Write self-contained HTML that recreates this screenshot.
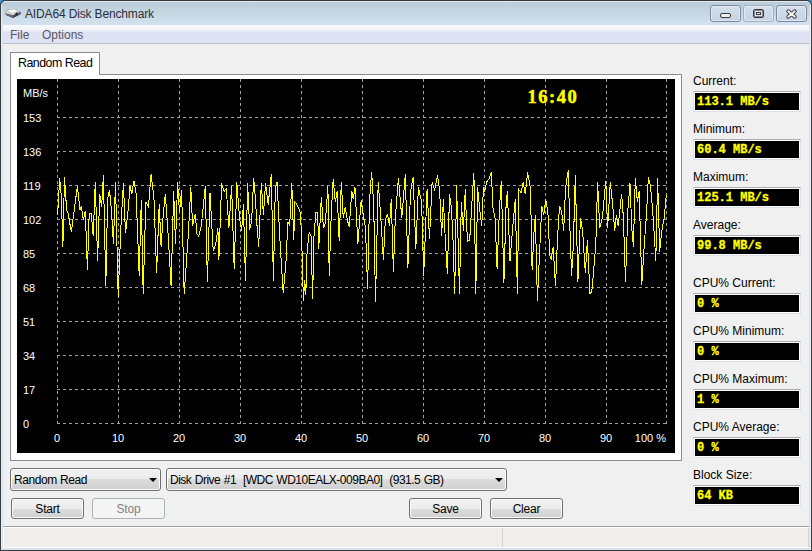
<!DOCTYPE html>
<html><head><meta charset="utf-8">
<style>
*{margin:0;padding:0;box-sizing:border-box}
html,body{width:812px;height:551px;overflow:hidden;background:#3d9be6}
body{position:relative;font-family:"Liberation Sans",sans-serif}
.a{position:absolute}
#win{left:0;top:0;width:812px;height:551px;background:#3a3a3a;border-radius:5px 5px 0 0}
#frame{left:1px;top:1px;width:810px;height:549px;background:#d4e1ee;border-radius:5px 5px 0 0}
#title{left:1px;top:1px;width:810px;height:24px;border-radius:5px 5px 0 0;background:linear-gradient(#e2eaf2 0,#e2eaf2 1px,#b9cdd9 1px,#d3e2ee 24px)}
#ttext{left:25px;top:7px;font-size:12px;color:#2e2e3c;letter-spacing:-0.15px;white-space:nowrap}
.tb{top:5px;width:31px;height:17px;border:1px solid #8c9aab;border-radius:3px;background:linear-gradient(#d3dfeb,#c4d3e3);box-shadow:inset 0 0 0 1px rgba(255,255,255,0.45)}
#menu{left:3px;top:25px;width:806px;height:19px;background:linear-gradient(#fafbfd 0,#eef0f8 6px,#dde1f1 7px,#dfe3f3 18px,#b8c0d0 18px)}
.mi{top:5px;font-size:12px;color:#5a5668}
#client{left:3px;top:44px;width:806px;height:482px;background:#f0f0f0}
#status{left:3px;top:526px;width:806px;height:22px;background:#a0a0a0}
#status2{left:3px;top:527px;width:806px;height:21px;background:#fff}
#status3{left:4px;top:528px;width:805px;height:19px;background:#f0edeb}
#tab{left:10px;top:52px;width:90px;height:23px;background:#fff;border:1px solid #898c95;border-bottom:none}
#panel{left:10px;top:74px;width:672px;height:387px;background:#fff;border:1px solid #898c95}
#tabpatch{left:11px;top:74px;width:88px;height:2px;background:#fff}
#tabtext{left:18px;top:56px;font-size:12.4px;letter-spacing:-0.5px;color:#000;white-space:nowrap}
#chart{left:17px;top:79px;width:658px;height:374px;background:#000}
.lbl{font-size:12px;color:#000;white-space:nowrap;left:693px;margin-top:1px}
.box{left:693px;width:108px;height:21px;border:1px solid #dbe0e8;border-top-color:#abadb3;background:#000;box-shadow:inset 0 0 0 1px #fff}
.val{position:absolute;left:3px;top:3px;font:bold 12px "Liberation Mono",monospace;color:#ffff00;white-space:nowrap;line-height:14px;-webkit-text-stroke:0.3px #ffff00}
.btn{top:498px;width:73px;height:21px;border:1px solid #707070;border-radius:3px;background:linear-gradient(#f2f2f2 0,#ebebeb 50%,#dddddd 50%,#cfcfcf 100%);box-shadow:inset 0 0 0 1px #fcfcfc;font-size:12px;text-align:center;line-height:21px;color:#000;letter-spacing:-0.2px}
.btn.dis{border-color:#adb2b5;background:#f4f4f4;color:#838383;box-shadow:none}
.combo{top:468px;height:23px;border:1px solid #707070;border-radius:3px;background:linear-gradient(#f2f2f2 0,#ebebeb 50%,#dddddd 50%,#cfcfcf 100%);box-shadow:inset 0 0 0 1px #fcfcfc;font-size:12px;color:#000;white-space:nowrap}
.combo span{position:absolute;left:3px;top:4px;letter-spacing:-0.4px}
.arr{position:absolute;top:9px;width:0;height:0;border-left:4px solid transparent;border-right:4px solid transparent;border-top:4px solid #000}
</style></head><body>
<div id="win" class="a"></div>
<div id="frame" class="a"></div>
<div id="title" class="a"></div>
<div class="a" style="left:1px;top:5px;width:1px;height:545px;background:#e8f0fa"></div>
<div class="a" style="left:810px;top:5px;width:1px;height:545px;background:#edf3fb"></div>
<svg class="a" style="left:0px;top:0px" width="24" height="24" viewBox="0 0 24 24">
<path d="M4.9 11.8 L7.9 9.3 L15.3 8.9 L21 12.4 L20.5 14.3 L13.1 18 L6 14.9 Z" fill="#3e3f46"/>
<path d="M4.9 11.8 L7.9 9.3 L15.3 8.9 L20 11.6 L13 15.6 L5.6 13.6 Z" fill="#cfcfcf"/>
<path d="M8 10.2 L14 9.8 L17 11.5 L12 13 Z" fill="#fafafa"/>
<path d="M5.6 13.6 L13 15.6 L13.1 18 L6 14.9 Z" fill="#66666c"/>
<path d="M18 12.4 L20 12 L19.8 13.6 L18 14 Z" fill="#8886c8"/>
<path d="M15.5 13 L17.5 12.6 L17.5 14.5 L15.5 15 Z" fill="#202028"/>
</svg>
<div id="ttext" class="a">AIDA64 Disk Benchmark</div>
<div class="a tb" style="left:710px;border-color:#7b88a3"></div>
<div class="a tb" style="left:743px;border-color:#a3afc0"></div>
<div class="a tb" style="left:776px;border-color:#7b88a3"></div>
<div class="a" style="left:720px;top:13px;width:11px;height:5px;border:1px solid #363a48;border-radius:2px;background:#f2efe8"></div>
<div class="a" style="left:753px;top:9px;width:11px;height:9px;border:1px solid #363a48;border-radius:2px;background:#e6e2da;box-shadow:inset 0 0 0 1px rgba(54,58,72,0.55)"></div>
<div class="a" style="left:756px;top:12px;width:5px;height:3px;border:1px solid #363a48;background:#dfe8f2"></div>
<svg class="a" style="left:776px;top:5px" width="31" height="17" viewBox="0 0 31 17"><path d="M12.2 6.3 L18.8 11.7 M18.8 6.3 L12.2 11.7" stroke="#363a48" stroke-width="3.8" stroke-linecap="round"/><path d="M12.2 6.3 L18.8 11.7 M18.8 6.3 L12.2 11.7" stroke="#f4f4f2" stroke-width="1.9" stroke-linecap="round"/></svg>
<div id="menu" class="a"></div>
<div class="a mi" style="left:10px;top:28px">File</div>
<div class="a mi" style="left:42px;top:28px">Options</div>
<div id="client" class="a"></div>
<div id="status" class="a"></div>
<div id="status2" class="a"></div>
<div id="status3" class="a"></div>
<div class="a" style="left:502px;top:528px;width:1px;height:19px;background:#d2d0ce"></div>
<div class="a" style="left:808px;top:528px;width:1px;height:19px;background:#d8d6d4"></div>

<div id="panel" class="a"></div>
<div id="tab" class="a"></div>
<div id="tabpatch" class="a"></div>
<div id="tabtext" class="a">Random Read</div>
<svg class="a" style="left:17px;top:79px" width="658" height="374" viewBox="17 79 658 374" shape-rendering="crispEdges">
<rect x="17" y="79" width="658" height="374" fill="#000"/>
<path d="M57.5 79V424M118.5 79V424M179.5 79V424M240.5 79V424M301.5 79V424M362.5 79V424M423.5 79V424M484.5 79V424M545.5 79V424M606.5 79V424M666.5 79V424M57 117.5H667M57 151.5H667M57 185.5H667M57 219.5H667M57 253.5H667M57 287.5H667M57 321.5H667M57 355.5H667M57 389.5H667M57 423.5H667" stroke="#a0a0a0" stroke-width="1" stroke-dasharray="3 3" fill="none"/>
<g font-family="Liberation Sans" font-size="11" fill="#fff">
<text x="23" y="96.5">MB/s</text>
<text x="23" y="122">153</text>
<text x="23" y="156">136</text>
<text x="23" y="190">119</text>
<text x="23" y="224">102</text>
<text x="23" y="258">85</text>
<text x="23" y="292">68</text>
<text x="23" y="326">51</text>
<text x="23" y="360">34</text>
<text x="23" y="394">17</text>
<text x="23" y="428">0</text>
<text x="57" y="442" text-anchor="middle">0</text>
<text x="118" y="442" text-anchor="middle">10</text>
<text x="179" y="442" text-anchor="middle">20</text>
<text x="240" y="442" text-anchor="middle">30</text>
<text x="301" y="442" text-anchor="middle">40</text>
<text x="362" y="442" text-anchor="middle">50</text>
<text x="423" y="442" text-anchor="middle">60</text>
<text x="484" y="442" text-anchor="middle">70</text>
<text x="545" y="442" text-anchor="middle">80</text>
<text x="606" y="442" text-anchor="middle">90</text>
<text x="666" y="442" text-anchor="end">100 %</text>
</g>
<text x="527.5" y="103" font-family="Liberation Serif" font-weight="bold" font-size="18.5" letter-spacing="1.5" fill="#ffff00" stroke="#ffff00" stroke-width="0.5" shape-rendering="auto">16:40</text>
<!--LINE--><path d="M57.6 215.0 L59.7 178.2 L61.3 196.6 L62.9 246.6 L64.5 176.8 L66.6 209.7 L68.2 213.7 L71.3 232.1 L73.9 212.4 L77.4 186.1 L80.0 209.7 L81.3 205.8 L83.4 220.3 L85.3 211.1 L87.4 270.3 L89.2 213.7 L91.3 213.7 L93.2 236.1 L95.3 182.1 L97.6 261.1 L99.7 193.9 L101.6 207.1 L103.4 175.5 L105.8 286.1 L107.6 199.2 L109.5 190.0 L111.6 212.4 L113.4 243.9 L115.5 182.1 L118.2 296.6 L120.8 228.2 L123.4 183.4 L125.5 233.4 L128.2 209.7 L130.0 186.1 L131.8 193.9 L133.9 180.8 L136.1 193.9 L139.2 275.5 L141.3 200.5 L143.2 293.9 L145.8 201.8 L148.4 207.1 L151.1 174.2 L153.9 196.6 L156.6 272.9 L159.2 204.5 L161.1 246.6 L163.2 215.0 L165.3 193.9 L167.9 230.8 L171.1 286.1 L173.7 191.3 L175.5 243.9 L177.6 182.1 L179.5 212.4 L181.6 190.0 L184.2 293.9 L188.2 236.1 L190.8 187.4 L192.6 225.5 L195.3 213.7 L196.8 233.4 L198.7 236.1 L201.3 225.5 L205.3 186.1 L207.4 282.1 L210.0 192.6 L213.2 250.5 L215.8 243.9 L217.9 228.2 L218.9 259.7 L221.6 183.4 L224.2 191.3 L226.3 188.7 L228.9 228.2 L231.6 186.1 L234.2 268.9 L236.8 182.1 L239.5 217.6 L241.6 230.8 L243.4 204.5 L245.5 280.8 L247.6 183.4 L249.7 229.5 L251.6 221.6 L253.7 178.2 L255.5 199.2 L256.8 222.9 L258.7 246.6 L261.3 183.4 L263.4 215.0 L265.5 183.4 L268.2 204.5 L271.3 174.2 L273.4 280.8 L275.3 188.7 L277.1 182.1 L279.7 236.1 L283.2 292.6 L285.8 265.0 L287.9 221.6 L289.7 225.5 L291.8 183.4 L293.7 240.0 L295.0 201.8 L297.6 205.8 L300.3 212.4 L301.6 236.1 L303.4 301.1 L304.7 280.0 L305.8 295.0 L307.1 251.1 L309.2 232.1 L311.1 236.1 L312.6 298.9 L313.9 237.9 L315.8 212.9 L317.6 212.9 L318.7 249.2 L321.3 196.6 L323.4 228.2 L325.3 222.9 L327.9 186.1 L329.2 275.5 L331.3 212.4 L333.2 179.5 L335.3 201.8 L337.1 191.3 L339.2 241.3 L341.3 182.1 L343.2 217.6 L345.3 207.1 L347.4 220.3 L349.2 226.8 L351.8 191.3 L353.2 199.2 L355.0 187.4 L357.9 243.9 L361.1 200.5 L363.7 217.6 L365.5 228.2 L367.6 288.7 L369.5 201.8 L371.6 171.6 L373.7 204.5 L375.5 301.8 L378.2 182.1 L380.8 217.6 L383.4 259.7 L385.3 220.3 L387.4 213.7 L389.5 225.5 L391.3 199.2 L393.4 271.6 L395.3 217.6 L398.4 178.2 L401.8 217.6 L405.3 174.2 L407.9 267.6 L410.5 191.3 L413.2 176.8 L415.8 249.2 L418.4 187.4 L421.6 201.8 L423.7 275.5 L427.1 188.9 L429.5 238.7 L432.1 182.1 L434.7 190.0 L437.6 175.5 L439.7 191.3 L441.6 236.1 L443.4 199.2 L445.0 233.4 L447.4 274.2 L449.5 193.9 L451.3 207.1 L452.9 236.1 L454.7 293.9 L456.6 185.0 L459.5 293.9 L461.3 201.8 L463.4 230.8 L465.3 188.9 L466.6 228.2 L467.9 241.3 L469.7 240.0 L471.8 204.5 L473.9 172.9 L475.8 293.9 L477.6 187.4 L479.7 209.7 L481.8 225.5 L483.4 187.6 L484.7 191.3 L486.6 181.8 L489.2 178.9 L491.3 171.6 L492.9 207.1 L495.0 217.6 L497.1 268.9 L499.5 207.1 L501.3 180.8 L503.9 283.4 L506.1 204.5 L507.4 191.3 L510.0 261.1 L512.6 228.2 L515.3 199.2 L517.4 293.9 L518.9 189.7 L521.1 192.6 L523.2 181.8 L525.3 194.2 L527.6 172.4 L530.5 188.7 L532.1 270.3 L533.9 233.4 L535.3 215.0 L537.4 300.5 L540.0 243.9 L541.8 205.8 L543.7 215.0 L545.8 199.2 L547.9 212.4 L549.7 254.5 L551.1 259.7 L553.2 246.6 L555.5 286.1 L557.6 236.1 L559.5 205.8 L561.6 211.1 L563.7 230.8 L565.5 188.7 L568.2 170.3 L570.0 230.8 L571.6 275.5 L573.4 243.9 L575.3 175.5 L577.9 282.1 L580.5 217.6 L582.6 230.8 L585.3 272.9 L587.4 240.0 L590.0 293.9 L591.8 291.3 L593.9 267.6 L595.8 243.9 L597.6 182.1 L599.7 228.2 L602.4 217.6 L605.8 180.8 L607.6 228.2 L610.3 182.1 L612.9 207.1 L614.7 230.8 L616.3 215.0 L618.2 225.5 L621.6 193.9 L623.4 217.6 L625.5 282.1 L627.9 209.7 L630.0 183.4 L631.8 228.2 L633.4 246.6 L635.3 178.2 L637.4 201.8 L639.2 191.3 L641.8 284.7 L644.5 241.3 L646.3 217.6 L648.4 176.8 L650.5 186.1 L652.4 207.1 L654.2 233.4 L655.8 261.1 L657.6 178.2 L659.7 251.8 L661.6 232.1 L664.2 217.6 L666.3 195.3" stroke="#ffff00" stroke-width="1" fill="none" stroke-linejoin="miter"/>
</svg>

<div class="a lbl" style="top:73px">Current:</div>
<div class="a box" style="top:91px"><span class="val">113.1 MB/s</span></div>
<div class="a lbl" style="top:121px">Minimum:</div>
<div class="a box" style="top:139px"><span class="val">60.4 MB/s</span></div>
<div class="a lbl" style="top:169px">Maximum:</div>
<div class="a box" style="top:187px"><span class="val">125.1 MB/s</span></div>
<div class="a lbl" style="top:217px">Average:</div>
<div class="a box" style="top:235px"><span class="val">99.8 MB/s</span></div>
<div class="a lbl" style="top:275px">CPU% Current:</div>
<div class="a box" style="top:293px"><span class="val">0 %</span></div>
<div class="a lbl" style="top:323px">CPU% Minimum:</div>
<div class="a box" style="top:341px"><span class="val">0 %</span></div>
<div class="a lbl" style="top:371px">CPU% Maximum:</div>
<div class="a box" style="top:389px"><span class="val">1 %</span></div>
<div class="a lbl" style="top:419px">CPU% Average:</div>
<div class="a box" style="top:437px"><span class="val">0 %</span></div>
<div class="a lbl" style="top:467px">Block Size:</div>
<div class="a box" style="top:485px"><span class="val">64 KB</span></div>

<div class="a combo" style="left:10px;width:151px"><span>Random Read</span><div class="arr" style="left:138px"></div></div>
<div class="a combo" style="left:166px;width:341px"><span style="letter-spacing:-0.5px;word-spacing:0.6px">Disk Drive #1&nbsp; [WDC WD10EALX-009BA0]&nbsp; (931.5 GB)</span><div class="arr" style="left:328px"></div></div>
<div class="a btn" style="left:11px">Start</div>
<div class="a btn dis" style="left:92px">Stop</div>
<div class="a btn" style="left:409px">Save</div>
<div class="a btn" style="left:490px">Clear</div>
</body></html>
